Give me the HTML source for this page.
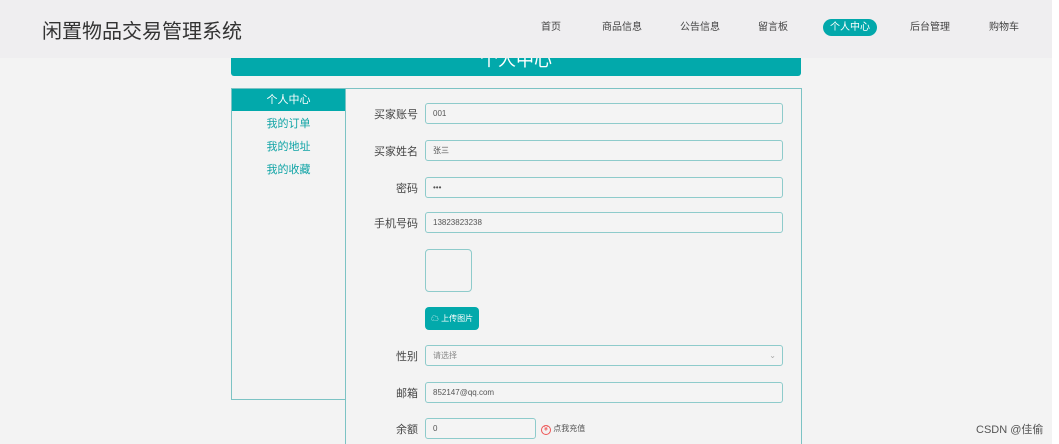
<!DOCTYPE html>
<html><head><meta charset="utf-8"><style>
*{margin:0;padding:0;box-sizing:border-box}
html,body{width:1059px;height:444px;overflow:hidden}
body{background:#fff;font-family:"Liberation Sans","Noto Sans CJK SC",sans-serif;position:relative}
.pg{position:absolute;left:0;top:0;width:1052px;height:444px;background:#f3f3f3}
.hd{position:absolute;left:0;top:0;width:1052px;height:58px;background:#efeef0}
.logo{position:absolute;left:42px;top:15px;font-size:20px;color:#333}
.nav{position:absolute;top:19px;font-size:10px;color:#444;height:17px;line-height:17px}
.nav.on{background:#02a8ab;color:#fff;border-radius:9px;padding:0 7px}
.a{position:absolute}
.bar{left:231px;top:58px;width:570px;height:18px;background:#02a9ab;border-radius:0 0 3px 3px;overflow:hidden;color:#fff;font-size:18px;text-align:center;line-height:4px}
.menu{left:231px;top:88px;width:115px;height:312px;border:1px solid #7cc3c4}
.mi{position:absolute;left:0;width:113px;text-align:center;font-size:11px;color:#10a4a6}
.form{left:345px;top:88px;width:457px;height:356px;border:1px solid #7cc3c4;border-bottom:none}
.lb{position:absolute;width:73px;left:345px;text-align:right;font-size:11px;color:#444}
.in{position:absolute;left:425px;width:358px;height:21px;border:1.5px solid #8ecbcb;border-radius:3px;background:#f4f4f4;font-size:8px;color:#555;padding-left:7px;line-height:19px}
</style></head><body>
<div class="pg"></div>
<div class="hd">
<div class="logo">闲置物品交易管理系统</div>
<div class="nav" style="left:541px">首页</div>
<div class="nav" style="left:602px">商品信息</div>
<div class="nav" style="left:680px">公告信息</div>
<div class="nav" style="left:758px">留言板</div>
<div class="nav on" style="left:823px">个人中心</div>
<div class="nav" style="left:910px">后台管理</div>
<div class="nav" style="left:989px">购物车</div>
</div>
<div class="a bar">个人中心</div>
<div class="a menu">
<div class="mi" style="top:0;height:22px;line-height:22px;background:#02a9ab;color:#fff">个人中心</div>
<div class="mi" style="top:26px">我的订单</div>
<div class="mi" style="top:49px">我的地址</div>
<div class="mi" style="top:72px">我的收藏</div>
</div>
<div class="a form"></div>
<div class="lb" style="top:106px">买家账号</div><div class="in" style="top:103px">001</div>
<div class="lb" style="top:143px">买家姓名</div><div class="in" style="top:140px">张三</div>
<div class="lb" style="top:180px">密码</div><div class="in" style="top:177px">•••</div>
<div class="lb" style="top:215px">手机号码</div><div class="in" style="top:212px">13823823238</div>
<div class="a" style="left:425px;top:249px;width:47px;height:43px;border:1.5px solid #8ecbcb;border-radius:4px"></div>
<div class="a" style="left:425px;top:307px;width:54px;height:23px;background:#02a9ab;border-radius:4px;color:#fff;font-size:8px;line-height:23px;text-align:center">☁ 上传图片</div>
<div class="lb" style="top:348px">性别</div><div class="in" style="top:345px;color:#888">请选择<span style="position:absolute;right:6px;color:#aaa">⌄</span></div>
<div class="lb" style="top:385px">邮箱</div><div class="in" style="top:382px">852147@qq.com</div>
<div class="lb" style="top:421px">余额</div><div class="in" style="top:418px;width:111px">0</div>
<div class="a" style="left:541px;top:423px;font-size:8px;color:#555"><span style="display:inline-block;width:10px;height:10px;border:1px solid #e55;border-radius:50%;color:#e55;font-size:7px;line-height:8px;text-align:center">¥</span> 点我充值</div>
<div class="a" style="left:976px;top:421px;font-size:11px;color:#555">CSDN @佳偷</div>
</body></html>
